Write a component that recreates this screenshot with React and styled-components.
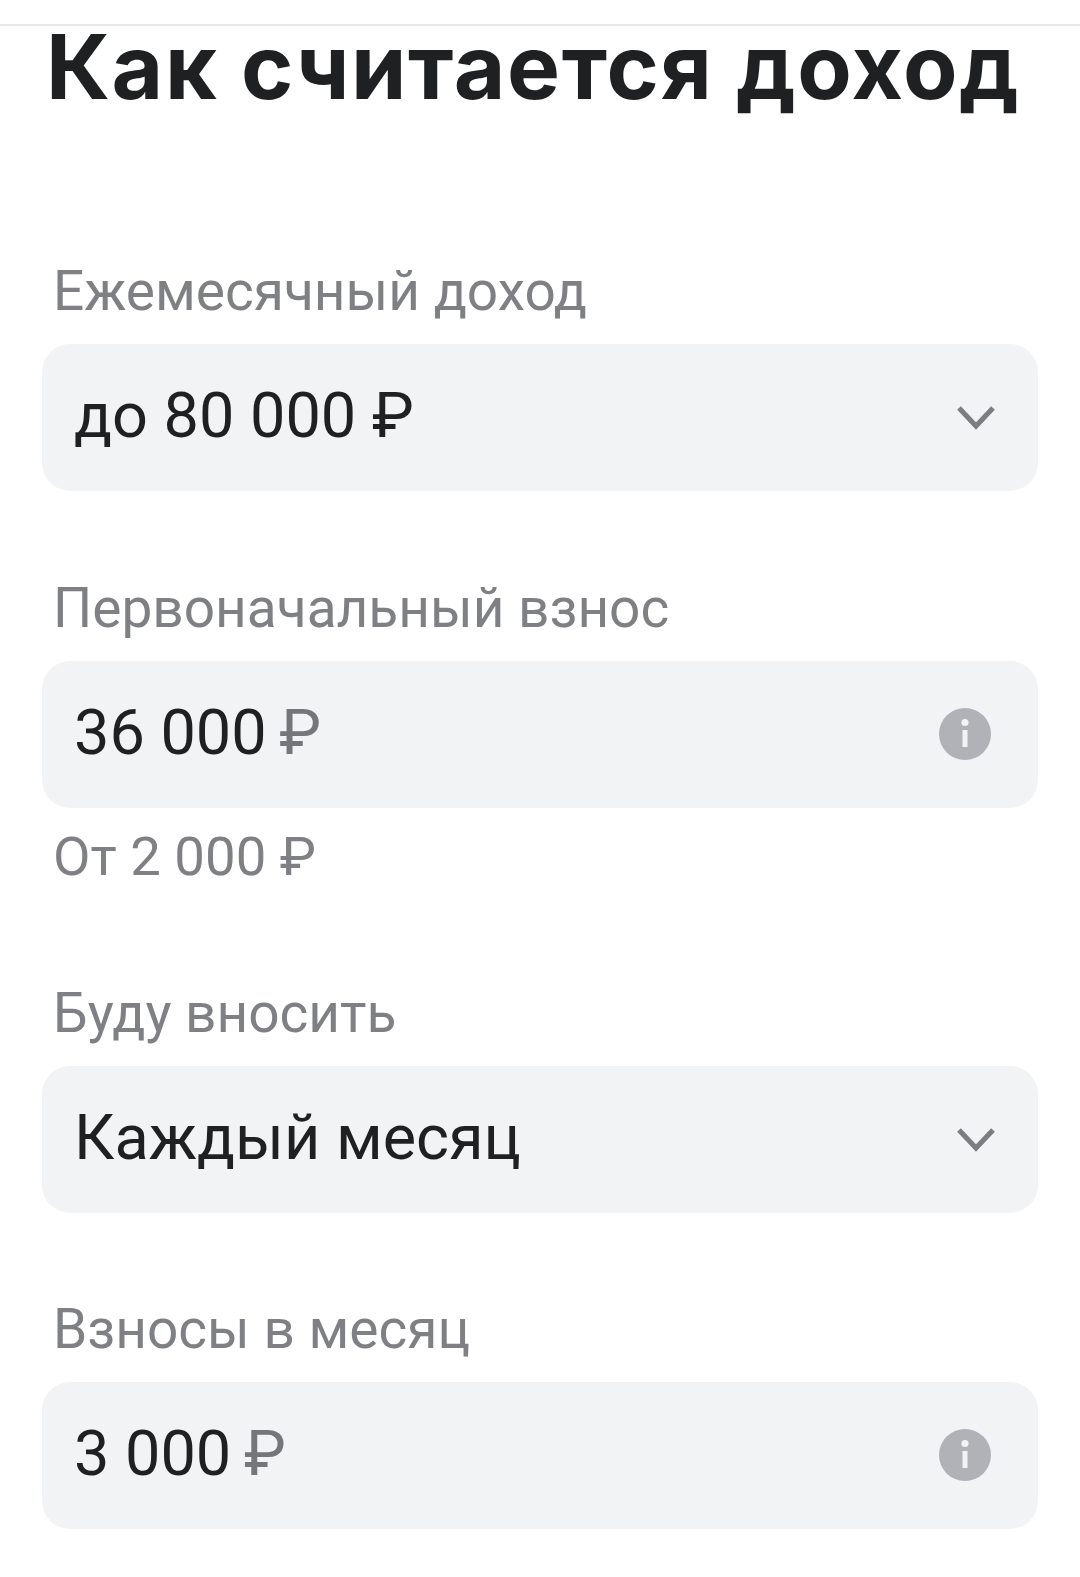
import React from 'react'
import styled, { createGlobalStyle } from 'styled-components'

const GlobalStyle = createGlobalStyle`
body {
  margin: 0;
  background: #fff;
  font-family: Roboto, "Liberation Sans", sans-serif;
}
`

const Page = styled.div`
width: 1080px;
height: 1577px;
overflow: hidden;
background: #fff;
`

const TopLine = styled.div`
height: 24px;
border-bottom: 2px solid #e8e8e8;
`

const Title = styled.h1`
margin: 0 0 0 46px;
height: 82px;
font-family: Inter, "Liberation Sans", sans-serif;
font-size: 89px;
font-weight: 700;
line-height: 82px;
letter-spacing: 1.6px;
color: #1f2022;
white-space: nowrap;
`

const Form = styled.div`
display: flex;
flex-direction: column;
padding: 0 42px;
margin-top: 143px;
`

const Group = styled.div`
display: flex;
flex-direction: column;
margin-bottom: ${props => props.$gap}px;
`

const Label = styled.div`
height: 93px;
padding-left: 11px;
font-size: 55px;
line-height: 80px;
color: #7f8083;
`

const Field = styled.div`
display: flex;
align-items: center;
justify-content: space-between;
box-sizing: border-box;
height: 147px;
padding: 0 44px 0 32px;
background: #f2f3f5;
border-radius: 28px;
`

const Value = styled.div`
font-size: 63px;
line-height: 147px;
color: #1f2022;
margin-top: -5px;
`

const Currency = styled.span`
color: ${props => props.$muted ? '#75767a' : '#1f2022'};
margin-left: ${props => props.$muted ? '-3px' : '0'};
`

const Hint = styled.div`
height: 72px;
padding-left: 11px;
margin-top: 12px;
font-size: 54.5px;
line-height: 72px;
color: #7f8083;
`

const IconWrap = styled.div`
display: flex;
margin-right: ${props => props.$shift}px;
margin-bottom: ${props => props.$lift}px;
`

function Chevron() {
  return (
    <IconWrap $shift={-2} $lift={0}>
      <svg width='40' height='26' viewBox='0 0 40 26'>
        <path d='M3 3 L20 21 L37 3' fill='none' stroke='#7c7d81' strokeWidth='5' />
      </svg>
    </IconWrap>
  )
}

function Info() {
  return (
    <IconWrap $shift={3} $lift={2}>
      <svg width='52' height='52' viewBox='0 0 52 52'>
        <circle cx='26' cy='26' r='26' fill='#b1b2b8' />
        <circle cx='26' cy='14.5' r='3.6' fill='#f2f3f5' />
        <rect x='23.5' y='22' width='5' height='17' fill='#f2f3f5' />
      </svg>
    </IconWrap>
  )
}

export default function App() {
  return (
    <Page>
      <GlobalStyle />
      <TopLine />
      <Title>Как считается доход</Title>
      <Form>
        <Group $gap={77}>
          <Label>Ежемесячный доход</Label>
          <Field>
            <Value>до 80 000 <Currency>₽</Currency></Value>
            <Chevron />
          </Field>
        </Group>
        <Group $gap={81}>
          <Label>Первоначальный взнос</Label>
          <Field>
            <Value>36 000 <Currency $muted>₽</Currency></Value>
            <Info />
          </Field>
          <Hint>От 2 000 ₽</Hint>
        </Group>
        <Group $gap={76}>
          <Label>Буду вносить</Label>
          <Field>
            <Value>Каждый месяц</Value>
            <Chevron />
          </Field>
        </Group>
        <Group $gap={0}>
          <Label>Взносы в месяц</Label>
          <Field>
            <Value>3 000 <Currency $muted>₽</Currency></Value>
            <Info />
          </Field>
        </Group>
      </Form>
    </Page>
  )
}
